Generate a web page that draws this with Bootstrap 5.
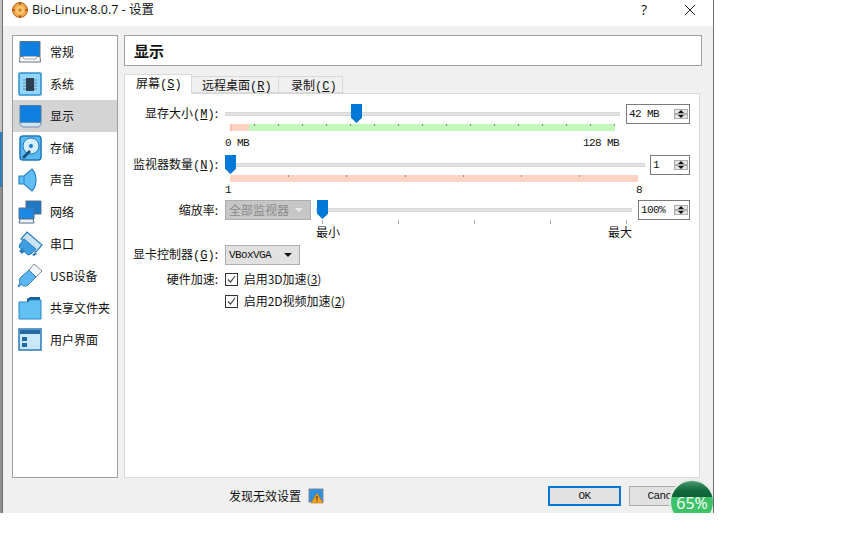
<!DOCTYPE html>
<html lang="zh">
<head>
    <meta charset="UTF-8" />
    <meta name="viewport" content="width=device-width, initial-scale=1.0" />
    <title>Bio-Linux-8.0.7 - 设置</title>
    <link href="https://cdn.jsdelivr.net/npm/bootstrap@5.3.0/dist/css/bootstrap.min.css" rel="stylesheet">
    <style>
        body {
            margin: 0;
            background: #fff;
            color: #111;
            font: 12px/16px "Noto Sans CJK SC", sans-serif;
        }
        .shot { width: 864px; height: 540px; overflow: hidden; display: flex; }
        .desk-edge { width: 2px; height: 513px; background: linear-gradient(#c4c4c4 0 132px, #2f7fc0 132px 187px, #8f8f8f 187px 100%); }
        .vb-window {
            position: relative;
            width: 712px;
            height: 513px;
            overflow: hidden;
            background: #f0f0f0;
            border-left: 1px solid #6f6f6f;
            border-right: 1px solid #6f6f6f;
        }
        .vb-title { height: 26px; background: #fff; padding: 0 0 6px 8px; }
        .vb-title .win-name { font: 12.5px/20px "Open Sans", "Noto Sans CJK SC", sans-serif; margin-left: 3px; }
        .win-btn { width: 46px; text-align: center; font: 14px/20px "Open Sans", sans-serif; }
        .vb-main { padding: 9px 11px 0 9px; gap: 6px; height: 452px; }
        .vb-side { width: 106px; height: 443px; background: #fff; border: 1px solid #a0a0a0; flex: none; }
        .side-row { height: 32px; padding-left: 4px; gap: 7px; }
        .side-row svg { width: 26px; height: 26px; flex: none; }
        .side-row.on { background: #d4d4d4; }
        .vb-right { flex: 1; min-width: 0; }
        .page-head {
            height: 31px;
            background: #fff;
            border: 1px solid #a0a0a0;
            padding-left: 9px;
            font-size: 15px;
            font-weight: 700;
            line-height: 29px;
        }
        .tab-strip { margin: 9px 0 0 0; height: 18px; }
        .tab-item {
            height: 17px;
            margin-top: 1px;
            padding-left: 10px;
            background: #f0f0f0;
            border: 1px solid #d9d9d9;
            border-left: 0;
            line-height: 16px;
        }
        .tab-item.first { width: 68px; height: 20px; margin-top: -1px; padding-left: 11px; background: #fff; border-left: 1px solid #d9d9d9; border-bottom: 0; position: relative; z-index: 1; }
        .tab-item.second { width: 87px; }
        .tab-item.third { width: 64px; padding-left: 12px; }
        .tab-body {
            width: 576px;
            height: 385px;
            background: #fff;
            border: 1px solid #d9d9d9;
            padding-top: 10px;
        }
        .lbl { width: 100px; padding-right: 7px; text-align: right; flex: none; }
        .acc { font-family: "Liberation Mono", monospace; font-size: 12px; }
        .mono { font-family: "Liberation Mono", monospace; font-size: 11px; letter-spacing: -.6px; }
        .slide { position: relative; height: 20px; flex: none; }
        .slide::before { content: ""; position: absolute; left: 0; right: 0; top: 8px; height: 4px; background: #e3e3e3; border: 1px solid #d8d8d8; }
        .knob {
            position: absolute;
            top: 0;
            width: 11px;
            height: 19px;
            background: #0078d7;
            clip-path: polygon(0 0, 100% 0, 100% 72%, 50% 100%, 0 72%);
        }
        .spin {
            height: 20px;
            border: 1px solid #7a7a7a;
            background: #fff;
            padding-left: 2px;
            line-height: 18px;
            flex: none;
        }
        .spin-btns { width: 14px; margin: 1px 1px 1px auto; }
        .spin-btns span {
            height: 8px;
            background: #e5e5e5;
            border: 1px solid #adadad;
            display: flex;
            align-items: center;
            justify-content: center;
            flex: 1;
        }
        .arr-up { width: 0; height: 0; border: 3px solid transparent; border-top: 0; border-bottom: 3px solid #111; }
        .arr-dn { width: 0; height: 0; border: 3px solid transparent; border-bottom: 0; border-top: 3px solid #111; }
        .hint-bar { height: 7px; margin-left: 105px; }
        .hint-mem {
            width: 385px;
            background:
                repeating-linear-gradient(90deg, #8a8a8a 0 1px, transparent 1px 24px) 24px 0 / 100% 2px no-repeat,
                linear-gradient(90deg, #f6bdb0 0 2px, #ffd3c2 2px 19px, #c2f9bb 19px 100%);
        }
        .hint-mon {
            width: 408px;
            background:
                repeating-linear-gradient(90deg, #a08a80 0 1px, transparent 1px 58.3px) 58px 0 / 100% 2px no-repeat,
                #ffd3c2;
        }
        .end-labels { margin-left: 100px; }
        .combo {
            height: 20px;
            border: 1px solid #adadad;
            background: #e1e1e1;
            padding: 0 7px 0 3px;
            flex: none;
        }
        .combo.off { background: #c6c6c6; color: #8b8b8b; width: 86px; }
        .drop { width: 0; height: 0; border: 4px solid transparent; border-bottom: 0; border-top: 4px solid #111; margin-left: auto; }
        .combo.off .drop { border-top-color: #e8e8e8; }
        .tick-row {
            height: 4px;
            width: 305px;
            margin-left: 197px;
            background: repeating-linear-gradient(90deg, #a8a8a8 0 1px, transparent 1px 76px);
        }
        .chk {
            width: 13px;
            height: 13px;
            border: 1px solid #333;
            background: #fff;
            flex: none;
            margin-right: 3px;
        }
        .chk svg { display: block; width: 11px; height: 11px; }
        .vb-foot { height: 35px; padding: 0 0 0 226px; }
        .vb-btn { width: 73px; height: 20px; border: 1px solid #adadad; background: #e1e1e1; line-height: 18px; text-align: center; }
        .vb-btn.dflt { border: 2px solid #0078d7; line-height: 16px; }
        .speed-ball {
            position: absolute;
            left: 666px;
            top: 479px;
            width: 46px;
            height: 46px;
            border-radius: 50%;
            overflow: hidden;
            border: 2px solid #e3ece3;
            background: linear-gradient(#4c9a70 0, #116b3c 22%, #0f5f36 38%, #3dc267 38%, #3dc267 100%);
            color: #fff;
            text-align: center;
            font: 16px/16px "Open Sans", sans-serif;
            padding-top: 14px;
        }
    </style>
</head>
<body>
<div class="shot">
    <div class="desk-edge"></div>
    <div class="vb-window">
        <div class="vb-title d-flex align-items-center">
            <svg width="18" height="18" viewBox="0 0 18 18"><circle cx="9" cy="9" r="7.5" fill="#f2a64a" stroke="#b5651d"/><circle cx="9" cy="9" r="4.5" fill="#f7c46e"/><circle cx="9" cy="2.5" r="1.2" fill="#a85a1b"/><circle cx="9" cy="15.5" r="1.2" fill="#a85a1b"/><circle cx="2.5" cy="9" r="1.2" fill="#a85a1b"/><circle cx="15.5" cy="9" r="1.2" fill="#a85a1b"/><circle cx="9" cy="9" r="1.5" fill="#c77a2c"/></svg>
            <span class="win-name">Bio-Linux-8.0.7 - 设置</span>
            <span class="win-btn ms-auto">?</span>
            <span class="win-btn d-flex align-items-center justify-content-center"><svg width="12" height="12" viewBox="0 0 12 12"><path d="M1 1 11 11M11 1 1 11" stroke="#222" fill="none"/></svg></span>
        </div>
        <div class="vb-main d-flex">
            <div class="vb-side">
                <div class="side-row d-flex align-items-center"><svg viewBox="0 0 26 26"><path d="M3 2.500h20v15H3z" fill="#1080e0" stroke="#66747f"/><path d="M3 17.500h20l.5 5.500H2.500z" fill="#fafafa" stroke="#66747f"/><path d="M6 17.500l1 2.500h12l1-2.500" fill="#fff" stroke="#66747f" stroke-width=".6"/></svg>常规</div>
                <div class="side-row d-flex align-items-center"><svg viewBox="0 0 26 26"><rect x="2" y="2" width="22" height="22" rx="1" fill="#8fd6fa" stroke="#2f8fd0" stroke-width="1.5"/><rect x="9" y="7" width="8" height="13" fill="#2d3f50"/><path d="M6 9h3M6 12h3M6 15h3M6 18h3M17 9h3M17 12h3M17 15h3M17 18h3" stroke="#5e8aa8"/></svg>系统</div>
                <div class="side-row on d-flex align-items-center"><svg viewBox="0 0 26 26"><path d="M3 2.500h21v17H3z" fill="#1080e0" stroke="#4f7ea3"/><path d="M3 19.500h21v2l-2 2.500H6l-3-2.500z" fill="#cfe3f2" stroke="#6f8fa8"/></svg>显示</div>
                <div class="side-row d-flex align-items-center"><svg viewBox="0 0 26 26"><rect x="3" y="1" width="21" height="24" rx="3" fill="#5ab8f0" stroke="#1d78bd" stroke-width="1.500"/><circle cx="14" cy="11" r="8" fill="#d6effc" stroke="#1d78bd"/><circle cx="14" cy="11" r="2" fill="#1d78bd"/><path d="M5 22l7-7 2 2-7 7z" fill="#17527f"/></svg>存储</div>
                <div class="side-row d-flex align-items-center"><svg viewBox="0 0 26 26"><path d="M2 9h5l8-7c3 3 4 7 4 11s-1 8-4 11l-8-7H2z" fill="#62bdf2" stroke="#2a83c4" stroke-width="1.2"/><path d="M7 9v8" stroke="#2a83c4"/></svg>声音</div>
                <div class="side-row d-flex align-items-center"><svg viewBox="0 0 26 26"><path d="M9 2h15v13H9z" fill="#1d78c4" stroke="#55718a"/><path d="M2 9h15v11H2z" fill="#1a8ae6" stroke="#55718a"/><path d="M3 20h13l1 4H2z" fill="#eef3f7" stroke="#55718a"/></svg>网络</div>
                <div class="side-row d-flex align-items-center"><svg viewBox="0 0 26 26"><path d="M10 1l15 13-6 7L4 8z" fill="#c9e3f5" stroke="#2c7fba" stroke-width="1.2"/><path d="M7 8l12 10-5 5-3 1-9-8 1-3z" fill="#3d9fe2" stroke="#2c7fba"/><path d="M2 20l3-3 3 3-3 3zM15 24l3-3 2 2-3 2z" fill="#2c7fba"/></svg>串口</div>
                <div class="side-row d-flex align-items-center"><svg viewBox="0 0 26 26"><path d="M17 1l8 7-6 6-7-7z" fill="#f4f8fb" stroke="#7d8f9c"/><path d="M12 7l7 7-8 8c-3 2-6 1-7-1l-2 3-1-1 2-3c-1-2-1-4 1-6z" fill="#5eb6f0" stroke="#2c7fba"/></svg>USB设备</div>
                <div class="side-row d-flex align-items-center"><svg viewBox="0 0 26 26"><path d="M10 4l3-2h10v6H10z" fill="#155f9e"/><path d="M2 7h9l2-2h11v19H2z" fill="#62c0f5" stroke="#2b86c5"/></svg>共享文件夹</div>
                <div class="side-row d-flex align-items-center"><svg viewBox="0 0 26 26"><rect x="2" y="2" width="22" height="21" fill="#c9e9fb" stroke="#2b7bb8" stroke-width="1.5"/><rect x="3" y="3" width="20" height="4" fill="#23689e"/><rect x="5" y="10" width="5" height="4" fill="#23689e"/><rect x="5" y="16" width="5" height="4" fill="#23689e"/></svg>用户界面</div>
            </div>
            <div class="vb-right">
                <div class="page-head">显示</div>
                <div class="tab-strip d-flex">
                    <div class="tab-item first">屏幕<span class="acc">(<u>S</u>)</span></div>
                    <div class="tab-item second">远程桌面<span class="acc">(<u>R</u>)</span></div>
                    <div class="tab-item third">录制<span class="acc">(<u>C</u>)</span></div>
                </div>
                <div class="tab-body">
                    <div class="d-flex align-items-center">
                        <div class="lbl">显存大小<span class="acc">(<u>M</u>)</span>:</div>
                        <div class="slide" style="width:395px"><div class="knob" style="left:126px"></div></div>
                        <div class="spin mono d-flex align-items-center" style="width:64px;margin-left:6px">42 MB<div class="spin-btns d-flex flex-column"><span><i class="arr-up"></i></span><span><i class="arr-dn"></i></span></div></div>
                    </div>
                    <div class="hint-bar hint-mem"></div>
                    <div class="end-labels mono d-flex justify-content-between" style="width:394px;margin-top:4px">
                        <span>0 MB</span><span>128 MB</span>
                    </div>
                    <div class="d-flex align-items-center" style="margin-top:4px">
                        <div class="lbl">监视器数量<span class="acc">(<u>N</u>)</span>:</div>
                        <div class="slide" style="width:420px"><div class="knob" style="left:0"></div></div>
                        <div class="spin mono d-flex align-items-center" style="width:40px;margin-left:5px">1<div class="spin-btns d-flex flex-column"><span><i class="arr-up"></i></span><span><i class="arr-dn"></i></span></div></div>
                    </div>
                    <div class="hint-bar hint-mon"></div>
                    <div class="end-labels mono d-flex justify-content-between" style="width:417px">
                        <span>1</span><span>8</span>
                    </div>
                    <div class="d-flex align-items-center" style="margin-top:2px">
                        <div class="lbl">缩放率:</div>
                        <div class="combo off d-flex align-items-center">全部监视器<i class="drop"></i></div>
                        <div class="slide" style="width:316px;margin-left:5px"><div class="knob" style="left:1px"></div></div>
                        <div class="spin mono d-flex align-items-center" style="width:52px;margin-left:6px">100%<div class="spin-btns d-flex flex-column"><span><i class="arr-up"></i></span><span><i class="arr-dn"></i></span></div></div>
                    </div>
                    <div class="tick-row"></div>
                    <div class="d-flex justify-content-between" style="width:316px;margin-left:191px;">
                        <span>最小</span><span>最大</span>
                    </div>
                    <div class="d-flex align-items-center" style="margin-top:5px">
                        <div class="lbl">显卡控制器<span class="acc">(<u>G</u>)</span>:</div>
                        <div class="combo mono d-flex align-items-center" style="width:75px">VBoxVGA<i class="drop"></i></div>
                    </div>
                    <div class="d-flex align-items-center" style="margin-top:3px;height:22px">
                        <div class="lbl">硬件加速:</div>
                        <div class="d-flex align-items-center"><span class="chk"><svg viewBox="0 0 11 11"><path d="M2 5.5 4.5 8 9 2" fill="none" stroke="#444" stroke-width="1.2"/></svg></span>&nbsp;启用3D加速(<u>3</u>)</div>
                    </div>
                    <div class="d-flex align-items-center" style="height:22px">
                        <div class="lbl"></div>
                        <div class="d-flex align-items-center"><span class="chk"><svg viewBox="0 0 11 11"><path d="M2 5.5 4.5 8 9 2" fill="none" stroke="#444" stroke-width="1.2"/></svg></span>&nbsp;启用2D视频加速(<u>2</u>)</div>
                    </div>
                </div>
            </div>
        </div>
        <div class="vb-foot d-flex align-items-center">
            <span>发现无效设置</span>
            <svg style="margin-left:7px" width="16" height="16" viewBox="0 0 16 16"><rect x="1" y="1" width="14" height="13" fill="#2f8fdc" stroke="#7b8b97"/><path d="M9 5l6 10H3z" fill="#f4a31f" stroke="#b96f0c" stroke-width=".6"/><path d="M9 8v3.5M9 12.5v1" stroke="#222"/></svg>
            <div class="vb-btn dflt mono" style="margin-left:224px">OK</div>
            <div class="vb-btn mono" style="margin-left:8px">Cancel</div>
        </div>
        <div class="speed-ball">65%</div>
    </div>
</div>
<script src="https://cdn.jsdelivr.net/npm/bootstrap@5.3.0/dist/js/bootstrap.bundle.min.js"></script>
</body>
</html>
